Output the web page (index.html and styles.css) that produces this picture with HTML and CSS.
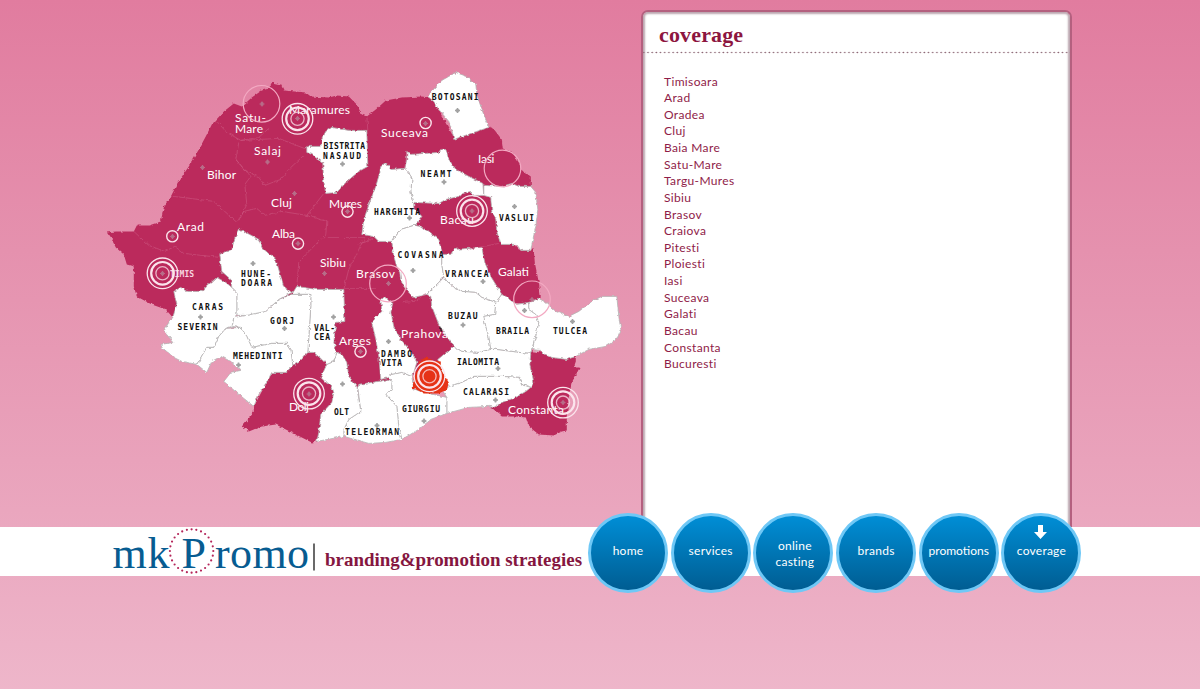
FILE: index.html
```html
<!DOCTYPE html>
<html lang="en">
<head>
<meta charset="utf-8">
<title>mk Promo - coverage</title>
<link rel="stylesheet" href="styles.css">
</head>
<body>
<main class="stage">
<svg class="map" viewBox="100 60 540 400" width="540" height="400" role="img" aria-label="Coverage map">
<defs>
<filter id="rough" x="-2%" y="-2%" width="104%" height="104%"><feTurbulence type="fractalNoise" baseFrequency="0.25" numOctaves="2" seed="4"/><feDisplacementMap in="SourceGraphic" scale="3.5" xChannelSelector="R" yChannelSelector="G"/></filter>
<path id="c" d="M-2.5 0H2.5M0-2.5V2.5M-1.3-1.3 1.3 1.3M-1.3 1.3 1.3-1.3" />
<g id="t"><circle r="15.3" stroke-width="1.3"/><circle r="11.3" stroke-width="2.2"/><circle r="6.6" stroke-width="1.3" opacity=".75"/></g>
</defs>
<g filter="url(#rough)" transform="translate(-1.2 -.6)">
<path class="land" d="M108 233 117 232 135 232 138 226 150 226 162 222 165 207 172 197 179 183 190 167 200 150 208 135 213 125 225 112 235 104 243 107 253 98 263 91 270 89 273 83 282 85 285 91 307 93 312 97 330 98 338 96 350 97 358 105 363 115 368 117 377 110 387 101 403 98 423 97 430 98 435 102 455 138 493 127 503 140 504 149 513 152 520 163 522 170 532 177 532 187 520 195 500 230 520 250 535 250 536 263 540 283 542 298 532 305 480 300 440 300 470 345 535 352 577 357 577 362 575 368 581 368 573 383 570 397 568 417 568 431 563 432 555 436 540 435 530 427 527 418 517 417 503 417 495 410 440 370 350 390 318 442 313 443 293 433 277 425 263 427 250 432 243 427 255 413 255 407 280 360 260 300 180 300 174 318 167 310 153 305 138 297 135 287 135 267 128 265 125 255 117 248 113 240Z"/>
<g class="white">
<path d="M432 93 443 81 457 73 468 77 477 85 478 95 483 110 488 123 490 128 475 133 455 140 453 130 450 122 440 110 435 102 429 97Z"/>
<path d="M323 140 327 132 333 128 350 131 368 131 369 167 360 172 347 183 338 193 327 194 325 183 324 163 313 155 308 153 308 147 322 147Z"/>
<path d="M408 152 412 155 440 153 442 150 447 150 450 160 457 170 470 177 484 184 485 196 475 196 472 192 463 194 460 197 447 200 440 204 415 203 412 193 413 180 410 173 406 169 408 160Z"/>
<path d="M485 186 503 187 513 184 520 187 532 187 537 193 539 210 537 227 533 245 532 251 522 251 518 245 502 245 498 232 497 220 493 212 492 198 485 196Z"/>
<path d="M382 167 388 164 393 170 406 169 410 173 413 180 412 193 415 203 415 208 423 217 418 225 402 230 393 242 380 242 375 237 363 235 365 220 372 200 377 187 381 173Z"/>
<path d="M393 242 402 230 415 226 422 227 440 240 443 252 443 265 445 277 440 283 428 295 415 298 410 293 403 283 402 273 398 267 395 257Z"/>
<path d="M443 255 452 255 455 250 483 248 486 263 492 277 503 295 497 303 483 298 477 293 463 292 453 287 445 278 443 265Z"/>
<path d="M445 278 453 287 463 292 477 293 483 298 497 303 496 315 485 317 487 327 490 337 492 350 480 353 463 352 455 347 448 337 440 325 433 307 432 297 428 295 440 283Z"/>
<path d="M503 295 518 305 530 303 530 310 537 315 540 323 537 337 533 350 532 354 520 353 497 350 492 350 490 337 487 327 485 317 496 315 497 303Z"/>
<path d="M530 303 540 299 547 303 557 312 570 317 580 312 593 302 603 297 618 297 620 317 622 330 618 340 607 347 590 350 577 357 568 360 553 358 547 355 540 351 533 350 537 337 540 323 537 315 530 310Z"/>
<path d="M455 347 463 352 480 353 492 350 497 350 520 353 532 354 531 365 533 373 535 383 532 388 523 385 520 378 503 377 475 377 463 383 450 387 445 378 439 360Z"/>
<path d="M450 387 463 383 475 377 503 377 520 378 523 385 532 388 527 392 517 398 503 403 495 408 490 407 470 408 448 414 448 398 445 393Z"/>
<path d="M390 378 392 375 403 373 413 377 415 390 430 394 448 398 448 414 432 420 420 430 403 440 400 427 398 407 387 395 393 390 393 382Z"/>
<path d="M359 388 360 385 380 382 390 380 393 382 393 390 387 395 398 407 400 427 403 440 387 443 370 444 345 437 345 430 350 420 362 412Z"/>
<path d="M338 353 343 355 348 363 350 377 358 387 362 412 350 420 345 430 345 437 318 442 320 433 322 415 333 403 335 393 333 387 327 383 322 378 328 365 335 362Z"/>
<path d="M298 287 317 290 345 290 346 322 337 323 335 343 338 353 335 362 328 365 323 360 315 353 309 353 312 307 312 295 293 295Z"/>
<path d="M293 295 312 295 312 307 309 353 300 363 294 366 292 350 288 344 273 344 253 348 248 337 242 328 233 327 235 318 247 316 267 312 280 300Z"/>
<path d="M240 229 247 233 260 240 263 248 273 257 277 260 282 277 285 287 293 293 280 300 267 312 247 316 238 316 238 293 233 288 232 280 223 272 221 255 233 250 235 242Z"/>
<path d="M175 292 182 288 188 292 203 292 210 285 218 278 227 283 233 288 238 293 238 316 235 318 233 327 227 329 220 337 215 348 208 348 198 365 183 362 175 358 163 348 162 345 175 343 165 332 170 323 174 318 178 305Z"/>
<path d="M198 365 208 348 215 348 220 337 227 329 242 328 248 337 253 348 273 344 288 344 292 350 294 366 287 373 273 373 267 385 260 395 255 407 240 395 225 382 232 373 242 371 232 362 222 357 213 362 208 373Z"/>
<path d="M382 300 387 298 394 303 392 313 395 327 402 340 413 353 418 363 415 373 413 377 403 373 392 375 390 378 382 380 380 357 377 340 373 323 378 317 383 312Z"/>
</g>
<path class="capital" d="M420 362 427 358 435 361 442 362 442 370 450 383 448 390 440 394 425 394 414 388 415 378 420 368Z"/>
<path class="inner" d="M218 122 228 133 242 141 260 138 270 129M240 143 237 160 252 177 246 185 248 205 240 222M242 141 280 139 308 150M237 160 245 170 260 178 266 186 282 180 292 168 305 156M175 197 215 202 238 223 245 212 258 209 266 216 283 212 308 216 328 222 327 235 312 250 300 263 298 287M308 216 325 194M328 238 366 238M135 232 150 246 166 252 176 247 185 254 221 258M366 238 350 270 345 289 376 289M404 303 416 302 428 294M500 244 470 250M374 239 360 245M368 117 369 131M408 153 406 169"/>
</g>
<g class="crosses"><use href="#c" x="457.5" y="110.5"/><use href="#c" x="444" y="182"/><use href="#c" x="514.5" y="206.5"/><use href="#c" x="409.5" y="218"/><use href="#c" x="342.5" y="164"/><use href="#c" x="253" y="263.5"/><use href="#c" x="200.5" y="317"/><use href="#c" x="284.5" y="328.5"/><use href="#c" x="333.5" y="317"/><use href="#c" x="238.5" y="365"/><use href="#c" x="342.5" y="384"/><use href="#c" x="413" y="270.5"/><use href="#c" x="483" y="281.5"/><use href="#c" x="463" y="325"/><use href="#c" x="524.5" y="310.5"/><use href="#c" x="572.5" y="321.5"/><use href="#c" x="498" y="368.5"/><use href="#c" x="495.5" y="400"/><use href="#c" x="424" y="421"/><use href="#c" x="377" y="425.5"/><use href="#c" x="388.5" y="341.5"/></g>
<g class="crosses dim"><use href="#c" x="202.5" y="167.5"/><use href="#c" x="267.5" y="162"/><use href="#c" x="294.5" y="193.5"/><use href="#c" x="324.5" y="273.5"/><use href="#c" x="262" y="104"/><use href="#c" x="297.5" y="118.5"/><use href="#c" x="172.5" y="236.5"/><use href="#c" x="298" y="243.5"/><use href="#c" x="347.5" y="211.5"/><use href="#c" x="425.5" y="123.5"/><use href="#c" x="360.5" y="351.5"/><use href="#c" x="472" y="211"/><use href="#c" x="162.5" y="273.5"/><use href="#c" x="309" y="394"/><use href="#c" x="563" y="402.5"/><use href="#c" x="388.5" y="283.5"/><use href="#c" x="532" y="299.5"/></g>
<g class="names">
<text><tspan x="235" y="121.5" textLength="31">Satu-</tspan><tspan x="235" y="132.5" textLength="28">Mare</tspan></text><text x="289" y="113.5" textLength="61">Maramures</text><text x="254" y="154.5" textLength="27">Salaj</text><text x="207" y="178.5" textLength="29">Bihor</text><text x="271" y="206.5" textLength="21">Cluj</text><text x="329" y="207.5" textLength="33">Mures</text><text x="177" y="230.5" textLength="27">Arad</text><text x="272" y="237.5" textLength="23">Alba</text><text x="381" y="137" textLength="47">Suceava</text><text x="478" y="163" textLength="16.5">Iasi</text><text x="440" y="223.5" textLength="34">Bacau</text><text x="320" y="266.5" textLength="26">Sibiu</text><text x="356" y="277.5" textLength="39">Brasov</text><text x="498" y="275.5" textLength="31">Galati</text><text x="339" y="344.5" textLength="32">Arges</text><text x="401" y="338" textLength="47">Prahova</text><text x="289" y="411" textLength="20">Dolj</text><text x="508" y="413.5" textLength="56">Constanta</text>
</g>
<g class="caps">
<text x="431.7" y="100" textLength="47">BOTOSANI</text><text x="420.5" y="177" textLength="31">NEAMT</text><text x="499" y="220.5" textLength="35">VASLUI</text><text x="374" y="215" textLength="46">HARGHITA</text><text x="397.5" y="257.5" textLength="46">COVASNA</text><text x="323.5" y="149" textLength="41.5">BISTRITA</text><text x="323" y="159" textLength="38">NASAUD</text><text x="241" y="276.5" textLength="30">HUNE-</text><text x="241" y="285.5" textLength="31">DOARA</text><text x="192" y="310" textLength="31">CARAS</text><text x="177.5" y="330" textLength="40">SEVERIN</text><text x="270" y="323.5" textLength="24">GORJ</text><text x="314" y="331" textLength="21">VAL-</text><text x="314" y="340" textLength="16">CEA</text><text x="233" y="359" textLength="49.5">MEHEDINTI</text><text x="334" y="415" textLength="15">OLT</text><text x="345" y="435" textLength="54">TELEORMAN</text><text x="381" y="357" textLength="31">DAMBO</text><text x="381" y="366" textLength="21">VITA</text><text x="445" y="276.5" textLength="43.5">VRANCEA</text><text x="448" y="319" textLength="29.5">BUZAU</text><text x="496" y="334" textLength="33">BRAILA</text><text x="553" y="334" textLength="34">TULCEA</text><text x="457" y="365" textLength="42">IALOMITA</text><text x="463" y="395" textLength="46">CALARASI</text><text x="402" y="411.5" textLength="38">GIURGIU</text><text class="pale" x="170" y="276.5" textLength="24">TIMIS</text>
</g>
<path d="M439 328h2v3h1" fill="none" stroke="#111"/>
<g class="rings">
<g class="wide"><circle cx="261.5" cy="103.8" r="18.3"/><circle cx="502.5" cy="168.5" r="18.3"/><circle cx="388" cy="283.5" r="18.3"/><circle cx="532" cy="299.3" r="18.3"/></g>
<use href="#t" x="297.5" y="118.8"/><use href="#t" x="472" y="211"/><use href="#t" x="162.5" y="273.3"/><use href="#t" x="309" y="393.6"/><use href="#t" x="563" y="402.6"/><use href="#t" x="429.5" y="376.3"/>
<circle cx="172.3" cy="236.3" r="5.6"/><circle cx="298" cy="243.6" r="5.6"/><circle cx="347.5" cy="211.6" r="5.6"/><circle cx="425.6" cy="123" r="5.6"/><circle cx="360.5" cy="351.6" r="5.6"/>
</g>
</svg>
<section class="panel">
<h1 class="title">coverage</h1>
<ul class="cities">
<li>Timisoara</li><li>Arad</li><li>Oradea</li><li>Cluj</li><li>Baia Mare</li><li>Satu-Mare</li><li>Targu-Mures</li><li>Sibiu</li><li>Brasov</li><li>Craiova</li><li>Pitesti</li><li>Ploiesti</li><li>Iasi</li><li>Suceava</li><li>Galati</li><li>Bacau</li><li>Constanta</li><li>Bucuresti</li>
</ul>
</section>
</main>
<footer class="band">
<svg class="brand" viewBox="100 527 488 49" width="488" height="49">
<g class="logo"><text x="112.5" y="568" textLength="57">mk</text><text x="181.5" y="568">P</text><text x="215" y="568" textLength="94">romo</text></g>
<circle class="dots" cx="191.6" cy="551" r="21.7" pathLength="28"/>
<path d="M314 543.5V570.5" stroke="#444" stroke-width="1.6"/>
<text class="tagline" x="325" y="566" textLength="257" lengthAdjust="spacingAndGlyphs">branding&amp;promotion strategies</text>
</svg>
<nav class="nav">
<a class="dot">home</a><a class="dot">services</a><a class="dot two">online<br>casting</a><a class="dot">brands</a><a class="dot long">promotions</a><a class="dot">coverage<svg class="arrow" viewBox="0 0 13 14" width="13" height="14"><path d="M4 0H9V7H13L6.5 14 0 7H4Z" fill="#fff"/></svg></a>
</nav>
</footer>
</body>
</html>
```

FILE: styles.css
```css
* { box-sizing: border-box; }
body {
  margin: 0;
  height: 689px;
  overflow: hidden;
  background: linear-gradient(#e17c9f 0, #e591ae 250px, #eaa6be 510px, #eeb6ca 689px);
  font-family: Lato, "Liberation Sans", sans-serif;
}
.stage { display: flex; height: 527px; padding-left: 100px; overflow: hidden; }
.map { margin-top: 60px; flex: none; }
.land { fill: #bb2a5c; }
.white path { fill: #fff; stroke: #b4b4b4; stroke-width: .8; }
.capital { fill: #e63212; }
.inner { fill: none; stroke: #ce5c86; stroke-width: .8; opacity: .65; }
.crosses { stroke: #a2a2a2; stroke-width: 1.6; }
.crosses.dim { stroke: #b76c88; stroke-width: 1.2; }
.names { fill: #fff; font-size: 12px; }
.caps { fill: #111; font: bold 8px "DejaVu Sans Mono", monospace; }
.pale { fill: #f7d4e0; }
.rings { fill: none; stroke: #fbe4ec; stroke-width: 1.4; }
.wide { stroke: #f3a9c2; stroke-width: 1.2; }
.panel {
  width: 431px;
  height: 530px;
  margin: 10px 0 0 1px;
  background: #fff;
  border: 2px solid #b4607f;
  border-bottom: 0;
  border-radius: 7px 7px 0 0;
  box-shadow: inset 0 0 2px 2px #bba6af;
}
.title {
  margin: 0;
  height: 42px;
  padding: 10px 0 0 16px;
  font: bold 22px/26px "Liberation Serif", serif;
  letter-spacing: .15px;
  color: #8d163f;
  background: radial-gradient(circle at 2px 1.5px, #8b6573 .5px, transparent 1.1px) 3px 39px / 4.2px 3px repeat-x;
}
.cities {
  list-style: none;
  margin: 0;
  padding: 19.5px 0 0 21px;
  color: #8f1c48;
  font-size: 12px;
  line-height: 16.62px;
  letter-spacing: .35px;
}
.band { display: flex; height: 49px; background: #fff; padding-left: 100px; }
.brand { flex: none; overflow: visible; }
.logo { fill: #075c91; font: 44px "Liberation Serif", serif; }
.dots { fill: none; stroke: #b5265a; stroke-width: 2.2; stroke-linecap: round; stroke-dasharray: 0 1; }
.tagline { fill: #851640; font: bold 19px "Liberation Serif", serif; }
.nav { display: flex; gap: 2.7px; margin-top: -14.5px; height: 80px; flex: none; }
.dot {
  position: relative;
  display: flex;
  align-items: center;
  justify-content: center;
  width: 80px;
  height: 80px;
  padding-bottom: 3px;
  border: 3.5px solid #6fc8f6;
  border-radius: 50%;
  background: linear-gradient(#008ed6, #005d92);
  color: #fff;
  font-size: 12px;
  line-height: 16px;
  letter-spacing: .25px;
  text-align: center;
}
.two { padding: 3px 0 0 3px; }
.long { letter-spacing: 0; }
.arrow { position: absolute; left: 30px; top: 9px; }
```
